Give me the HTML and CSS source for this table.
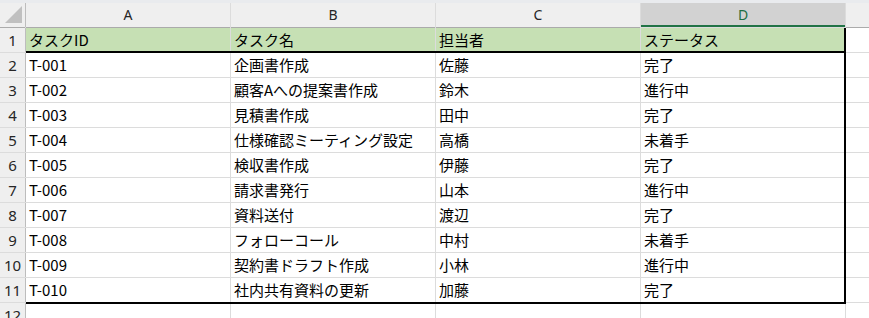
FILE: index.html
```html
<!DOCTYPE html>
<html lang="ja">
<head>
    <meta charset="utf-8">
    <title>タスク一覧</title>
    <link rel="stylesheet" href="styles.css">
</head>
<body>
    <div class="sheet">
        <!-- column headers -->
        <div class="corner">
            <svg width="25" height="24" viewBox="0 0 25 24"><polygon points="5,20 22,20 22,3" fill="#c0c0c0"/></svg>
        </div>
        <div class="col-head">A</div>
        <div class="col-head">B</div>
        <div class="col-head">C</div>
        <div class="col-head active">D</div>
        <div class="col-head"></div>

        <!-- header row -->
        <div class="row-head">1</div>
        <div class="cell title first">タスクID</div>
        <div class="cell title">タスク名</div>
        <div class="cell title">担当者</div>
        <div class="cell title edge">ステータス</div>
        <div class="cell"></div>

        <div class="row-head">2</div>
        <div class="cell">T-001</div>
        <div class="cell">企画書作成</div>
        <div class="cell">佐藤</div>
        <div class="cell edge">完了</div>
        <div class="cell"></div>

        <div class="row-head">3</div>
        <div class="cell">T-002</div>
        <div class="cell">顧客Aへの提案書作成</div>
        <div class="cell">鈴木</div>
        <div class="cell edge">進行中</div>
        <div class="cell"></div>

        <div class="row-head">4</div>
        <div class="cell">T-003</div>
        <div class="cell">見積書作成</div>
        <div class="cell">田中</div>
        <div class="cell edge">完了</div>
        <div class="cell"></div>

        <div class="row-head">5</div>
        <div class="cell">T-004</div>
        <div class="cell">仕様確認ミーティング設定</div>
        <div class="cell">高橋</div>
        <div class="cell edge">未着手</div>
        <div class="cell"></div>

        <div class="row-head">6</div>
        <div class="cell">T-005</div>
        <div class="cell">検収書作成</div>
        <div class="cell">伊藤</div>
        <div class="cell edge">完了</div>
        <div class="cell"></div>

        <div class="row-head">7</div>
        <div class="cell">T-006</div>
        <div class="cell">請求書発行</div>
        <div class="cell">山本</div>
        <div class="cell edge">進行中</div>
        <div class="cell"></div>

        <div class="row-head">8</div>
        <div class="cell">T-007</div>
        <div class="cell">資料送付</div>
        <div class="cell">渡辺</div>
        <div class="cell edge">完了</div>
        <div class="cell"></div>

        <div class="row-head">9</div>
        <div class="cell">T-008</div>
        <div class="cell">フォローコール</div>
        <div class="cell">中村</div>
        <div class="cell edge">未着手</div>
        <div class="cell"></div>

        <div class="row-head">10</div>
        <div class="cell">T-009</div>
        <div class="cell">契約書ドラフト作成</div>
        <div class="cell">小林</div>
        <div class="cell edge">進行中</div>
        <div class="cell"></div>

        <div class="row-head">11</div>
        <div class="cell last first">T-010</div>
        <div class="cell last">社内共有資料の更新</div>
        <div class="cell last">加藤</div>
        <div class="cell last edge">完了</div>
        <div class="cell"></div>

        <div class="row-head">12</div>
        <div class="cell"></div>
        <div class="cell"></div>
        <div class="cell"></div>
        <div class="cell"></div>
        <div class="cell"></div>
    </div>
</body>
</html>
```

FILE: styles.css
```css
html, body {
    margin: 0;
    height: 100%;
    overflow: hidden;
}
body {
    background: #e9ebee;
    padding-top: 3px;
    box-sizing: border-box;
}
.sheet {
    display: grid;
    grid-template-columns: 25px repeat(4, 204px) 1fr;
    grid-auto-rows: 24px;
    gap: 1px;
    background: #dcdcdc;
    font-family: "Noto Sans CJK JP", "Noto Sans", sans-serif;
    font-size: 15px;
    color: #000;
}
.corner {
    background: #efefef;
    box-shadow: 0 1px #ababab, 1px 0 #bdbdbd;
}
.corner svg {
    display: block;
}
.col-head {
    background: #efefef;
    color: #262626;
    font-family: "Noto Sans", sans-serif;
    font-size: 14px;
    line-height: 24px;
    text-align: center;
    box-shadow: 0 1px #ababab;
}
.col-head.active {
    background: #d2d2d2;
    color: #1e6e42;
    box-shadow: inset 0 -2px #217346;
}
.row-head {
    background: #efefef;
    color: #262626;
    font-family: "Noto Sans", sans-serif;
    font-size: 15px;
    line-height: 25px;
    text-align: center;
    box-shadow: 1px 0 #bdbdbd;
}
.cell {
    position: relative;
    background: #fff;
    line-height: 24px;
    padding-left: 3px;
    white-space: nowrap;
}
.cell.title {
    background: #c6e0b4;
}

/* thick borders of the data range, drawn above the grid lines */
.cell.title::after,
.cell.last::after {
    content: '';
    position: absolute;
    left: -1px;
    right: 0;
    bottom: -1px;
    height: 2px;
    background: #000;
    z-index: 1;
}
.cell.last::after {
    bottom: -2px;
}
.cell.first::after {
    left: 0;
}
.cell.edge::before {
    content: '';
    position: absolute;
    top: 0;
    bottom: -1px;
    right: -1px;
    width: 2px;
    background: #000;
    z-index: 1;
}
.cell.last.edge::before {
    bottom: -2px;
}
.cell.edge::after {
    right: -1px;
}
```
